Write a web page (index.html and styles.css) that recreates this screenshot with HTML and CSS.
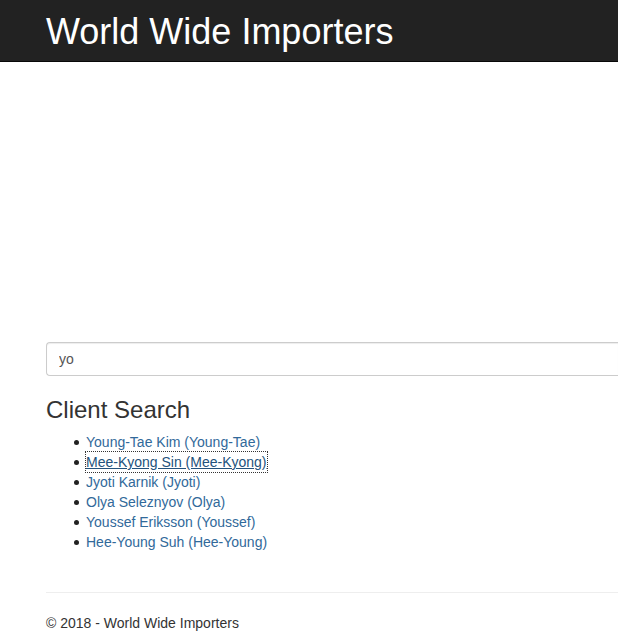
FILE: index.html
```html
<!DOCTYPE html>
<html lang="en">
<head>
<meta charset="utf-8">
<title>World Wide Importers</title>
<link rel="stylesheet" href="styles.css">
</head>
<body>
<header class="navbar">
  <a class="brand" href="#">World Wide Importers</a>
</header>
<main class="content">
  <div class="spacer"></div>
  <input class="search" type="text" value="yo">
  <h3 class="title">Client Search</h3>
  <ul class="results">
    <li><a href="#">Young-Tae Kim (Young-Tae)</a></li>
    <li><a href="#" class="focused">Mee-Kyong Sin (Mee-Kyong)</a></li>
    <li><a href="#">Jyoti Karnik (Jyoti)</a></li>
    <li><a href="#">Olya Seleznyov (Olya)</a></li>
    <li><a href="#">Youssef Eriksson (Youssef)</a></li>
    <li><a href="#">Hee-Young Suh (Hee-Young)</a></li>
  </ul>
  <hr class="rule">
  <footer class="footer">&copy; 2018 - World Wide Importers</footer>
</main>
</body>
</html>
```
FILE: styles.css
```css
html, body {
  margin: 0;
  padding: 0;
  overflow: hidden;
  background: #fff;
}
body {
  font-family: "Liberation Sans", Arial, sans-serif;
  font-size: 14px;
  color: #333;
}
.navbar {
  background: #222;
  height: 61px;
  border-bottom: 1px solid #080808;
  padding-left: 46px;
  box-sizing: content-box;
}
.brand {
  display: block;
  color: #fff;
  text-decoration: none;
  font-size: 36px;
  line-height: 36px;
  padding-top: 14px;
  white-space: nowrap;
}
.content {
  padding-left: 46px;
}
.spacer {
  height: 280px;
}
.search {
  display: block;
  box-sizing: border-box;
  width: 100%;
  height: 34px;
  padding: 6px 12px;
  margin: 0;
  font-family: "Liberation Sans", Arial, sans-serif;
  font-size: 14px;
  color: #555;
  border: 1px solid #ccc;
  border-right: 0;
  border-radius: 4px 0 0 4px;
  box-shadow: inset 0 1px 1px rgba(0,0,0,.075);
  outline: none;
}
.title {
  font-size: 24px;
  font-weight: normal;
  line-height: 26px;
  margin: 21px 0 9px;
  color: #333;
}
.results {
  margin: 0;
  padding-left: 28px;
  list-style: none;
  line-height: 20px;
}
.results li {
  display: flex;
  align-items: center;
}
.results li::before {
  content: "";
  width: 5px;
  height: 5px;
  border-radius: 50%;
  background: #222;
  margin-right: 7px;
  flex: none;
}
.results a {
  color: #31699a;
  text-decoration: none;
}
.results a.focused {
  color: #23527c;
  text-decoration: underline;
  outline: 1px dotted #333;
}
.rule {
  margin: 40px 0 0;
  border: 0;
  border-top: 1px solid #eee;
  height: 0;
}
.footer {
  margin-top: 20px;
  line-height: 20px;
}
```
